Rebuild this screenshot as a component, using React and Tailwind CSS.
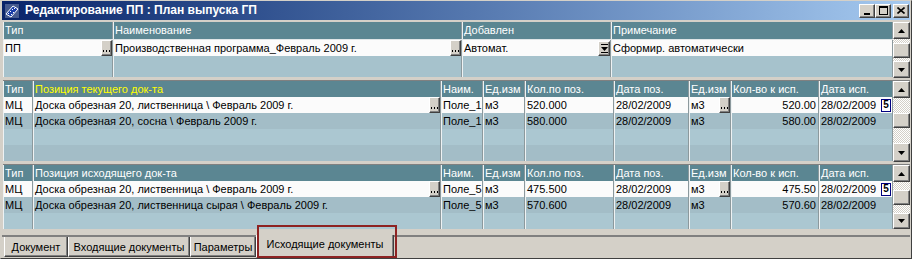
import React from 'react';

const FONT = "font-['Liberation_Sans',Arial,sans-serif]";
const HEAD = 'bg-[#5b8692]';
const WHITE = 'bg-[#fbfbfb]';
const DARK = 'bg-[#a3bdc7]';
const LIGHT = 'bg-[#abc7d1]';

function Bevel({ className = '', children }) {
  return (
    <div
      className={`flex shrink-0 items-center justify-center border border-t-white border-l-white border-r-[#404040] border-b-[#404040] bg-[#d4d0c8] shadow-[inset_-1px_-1px_0_#808080] ${className}`}
    >
      {children}
    </div>
  );
}

function Arrow({ down }) {
  return (
    <svg width="7" height="4" viewBox="0 0 7 4">
      <path d={down ? 'M0 0h7L3.5 4z' : 'M3.5 0L7 4H0z'} fill="#000" />
    </svg>
  );
}

function Dots() {
  return (
    <Bevel className="h-full w-[11px] items-end pb-[3px]">
      <svg width="7" height="2" viewBox="0 0 7 2">
        <rect x="0" y="0" width="1" height="2" fill="#000" />
        <rect x="3" y="0" width="1" height="2" fill="#000" />
        <rect x="6" y="0" width="1" height="2" fill="#000" />
      </svg>
    </Bevel>
  );
}

function Combo() {
  return (
    <Bevel className="h-[15px] w-[12px]">
      <svg width="7" height="9" viewBox="0 0 7 9">
        <rect x="0" y="0" width="7" height="1" fill="#000" />
        <path d="M0 3h7L3.5 7z" fill="#000" />
        <rect x="0" y="8" width="7" height="1" fill="#000" />
      </svg>
    </Bevel>
  );
}

function Calendar() {
  return (
    <div className="flex h-[13px] w-[10px] shrink-0 items-center justify-center border border-[#000080] bg-white text-[10px] font-bold leading-none">
      5
    </div>
  );
}

function Scrollbar({ top, bottom }) {
  return (
    <div className="flex w-[17px] shrink-0 flex-col">
      <Bevel className={top}>
        <Arrow />
      </Bevel>
      <div className="flex flex-1 flex-col justify-center bg-[repeating-conic-gradient(#d4d0c8_0_25%,#ffffff_0_50%)] bg-[length:2px_2px]">
        <Bevel className="h-[15px]" />
      </div>
      <Bevel className={bottom}>
        <Arrow down />
      </Bevel>
    </div>
  );
}

function Cell({ w, children, right, tail, head, yellow }) {
  return (
    <div
      className={`${w} flex h-full shrink-0 items-center overflow-hidden whitespace-nowrap border-l border-l-[#eef2f3] border-r border-r-[#8c999d] ${
        head ? (yellow ? 'text-[#ffff00]' : 'text-white') : 'text-black'
      }`}
    >
      <span className={`min-w-0 flex-1 overflow-hidden pl-[1px] ${right ? 'pr-[2px] text-right' : ''}`}>
        {children}
      </span>
      {tail}
    </div>
  );
}

function Row({ cols, cells = [], tails = {}, bg, h = 'h-[16px]', head, yellowCol }) {
  return (
    <div className={`flex ${h} ${bg}`}>
      {cols.map((c, i) => (
        <Cell
          key={i}
          w={c.w}
          right={c.right && !head}
          head={head}
          yellow={head && i === yellowCol}
          tail={tails[i]}
        >
          {head ? c.title : cells[i]}
        </Cell>
      ))}
    </div>
  );
}

const docCols = [
  { w: 'w-[110px]', title: 'Тип' },
  { w: 'w-[349px]', title: 'Наименование' },
  { w: 'w-[149px]', title: 'Добавлен' },
  { w: 'w-[282px]', title: 'Примечание' },
];

function posCols(title) {
  return [
    { w: 'w-[30px]', title: 'Тип' },
    { w: 'w-[408px]', title },
    { w: 'w-[42px]', title: 'Наим.' },
    { w: 'w-[42px]', title: 'Ед.изм' },
    { w: 'w-[89px]', title: 'Кол.по поз.' },
    { w: 'w-[75px]', title: 'Дата поз.' },
    { w: 'w-[42px]', title: 'Ед.изм' },
    { w: 'w-[88px]', title: 'Кол-во к исп.', right: true },
    { w: 'w-[74px]', title: 'Дата исп.' },
  ];
}

const rowTails = {
  1: <Dots />,
  6: <Dots />,
  8: (
    <div className="flex h-full items-center pr-[1px]">
      <Calendar />
    </div>
  ),
};

const curCols = posCols('Позиция текущего док-та');
const outCols = posCols('Позиция исходящего док-та');

function Tab({ w, children }) {
  return (
    <div
      className={`${w} flex h-[20px] shrink-0 items-center justify-center border-l border-l-white border-r border-r-[#404040] border-b border-b-[#404040] pt-[1px] shadow-[inset_-1px_-1px_0_#808080]`}
    >
      {children}
    </div>
  );
}

export default function App() {
  return (
    <div
      className={`${FONT} relative flex h-[259px] w-[912px] flex-col overflow-hidden border border-t-[#d4d0c8] border-l-[#d4d0c8] border-r-[#404040] border-b-[#404040] bg-[#d4d0c8] px-[1px] text-[11px] leading-[13px] text-black`}
    >
      {/* Title bar */}
      <div className="flex h-[19px] shrink-0 items-center bg-linear-to-r from-[#0a246a] to-[#a6caf0] pl-[2px] pr-[1px]">
        <svg width="16" height="16" viewBox="0 0 16 16" className="shrink-0">
          <rect x="0" y="0" width="16" height="16" fill="#0a246a" />
          <rect x="1" y="1" width="14" height="14" fill="#fff" opacity="0.25" />
          <path d="M2 11L9 3l5 3-7 8z" fill="#1c3ea8" stroke="#fff" strokeWidth="1" />
          <path d="M4 10l1 1M6 8l1 1M8 6l1 1M10 5l1 1M7 11l1 1M9 9l1 1" stroke="#fff" strokeWidth="1" />
        </svg>
        <span className="ml-[5px] text-[12px] font-bold text-white">Редактирование ПП : План выпуска ГП</span>
        <div className="ml-auto flex items-center">
          <Bevel className="h-[14px] w-[16px] items-end pb-[2px]">
            <div className="h-[2px] w-[6px] bg-black" />
          </Bevel>
          <Bevel className="h-[14px] w-[16px]">
            <div className="h-[9px] w-[9px] border border-t-2 border-black" />
          </Bevel>
          <Bevel className="ml-[2px] h-[14px] w-[16px]">
            <svg width="8" height="7" viewBox="0 0 8 7">
              <path d="M0.5 0.5l7 6M7.5 0.5l-7 6" stroke="#000" strokeWidth="1.6" />
            </svg>
          </Bevel>
        </div>
      </div>

      {/* Document panel */}
      <div className="ml-[1px] mt-[2px] flex h-[56px] shrink-0">
        <div className="flex flex-1 flex-col">
          <Row cols={docCols} head bg={HEAD} h="h-[18px] border-b border-b-[#dfe5e7]" />
          <Row
            cols={docCols}
            bg={WHITE}
            cells={['ПП', 'Производственная программа_Февраль 2009 г.', 'Автомат.', 'Сформир. автоматически']}
            tails={{
              0: <Dots />,
              1: <Dots />,
              2: (
                <div className="flex h-full items-center">
                  <Combo />
                </div>
              ),
            }}
          />
          <Row cols={docCols} bg="bg-[#a6c2cc]" h="h-[21px]" />
        </div>
        <Scrollbar top="h-[17px]" bottom="h-[17px]" />
      </div>

      {/* Current document positions */}
      <div className="ml-[1px] mt-[2px] flex h-[82px] shrink-0 border-t border-t-[#808080]">
        <div className="flex flex-1 flex-col">
          <Row cols={curCols} head bg={HEAD} yellowCol={1} />
          <Row
            cols={curCols}
            bg={WHITE}
            cells={[
              'МЦ',
              'Доска обрезная 20, лиственница \\ Февраль 2009 г.',
              'Поле_1',
              'м3',
              '520.000',
              '28/02/2009',
              'м3',
              '520.00',
              '28/02/2009',
            ]}
            tails={rowTails}
          />
          <Row
            cols={curCols}
            bg={DARK}
            cells={[
              'МЦ',
              'Доска обрезная 20, сосна \\ Февраль 2009 г.',
              'Поле_1',
              'м3',
              '580.000',
              '28/02/2009',
              'м3',
              '580.00',
              '28/02/2009',
            ]}
          />
          <Row cols={curCols} bg={LIGHT} />
          <Row cols={curCols} bg={DARK} />
        </div>
        <Scrollbar top="h-[17px]" bottom="h-[19px]" />
      </div>

      {/* Outgoing document positions */}
      <div className="ml-[1px] mt-[2px] flex h-[65px] shrink-0 border-t border-t-[#808080]">
        <div className="flex flex-1 flex-col">
          <Row cols={outCols} head bg={HEAD} />
          <Row
            cols={outCols}
            bg={WHITE}
            cells={[
              'МЦ',
              'Доска обрезная 20, лиственница \\ Февраль 2009 г.',
              'Поле_5',
              'м3',
              '475.500',
              '28/02/2009',
              'м3',
              '475.50',
              '28/02/2009',
            ]}
            tails={rowTails}
          />
          <Row
            cols={outCols}
            bg={DARK}
            cells={[
              'МЦ',
              'Доска обрезная 20, лиственница сырая \\ Февраль 2009 г.',
              'Поле_5',
              'м3',
              '570.600',
              '28/02/2009',
              'м3',
              '570.60',
              '28/02/2009',
            ]}
          />
          <Row cols={outCols} bg={LIGHT} />
        </div>
        <Scrollbar top="h-[17px]" bottom="h-[16px]" />
      </div>

      {/* Tabs */}
      <div className="mt-[6px] flex h-[22px] shrink-0 border-t-2 border-t-[#808080] pl-[2px]">
        <Tab w="w-[64px]">Документ</Tab>
        <Tab w="w-[122px]">Входящие документы</Tab>
        <Tab w="w-[66px]">Параметры</Tab>
        <div className="-mt-[2px] flex h-[23px] w-[138px] shrink-0 items-center justify-center border-l border-l-white border-r border-r-[#404040] border-b border-b-[#404040] bg-[#d4d0c8] pb-[3px] shadow-[inset_-1px_-1px_0_#808080]">
          Исходящие документы
        </div>
      </div>

      {/* Highlight over the active tab */}
      <div className="pointer-events-none absolute left-[256px] top-[224px] h-[33px] w-[140px] border-2 border-[#8e2323]" />
    </div>
  );
}
